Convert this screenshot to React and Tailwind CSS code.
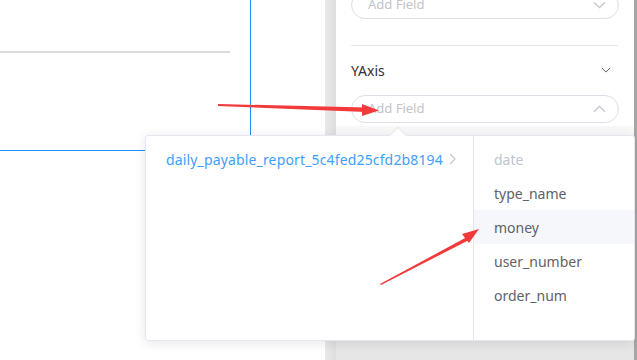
import React from 'react'

const Chevron = ({ dir = 'down', className = '', w = 13 }) => {
  const points = {
    down: '1,1 6,6 11,1',
    up: '1,6 6,1 11,6',
    right: '1,1 6,6 1,11',
  }[dir]
  const size = dir === 'right' ? { w: 8, h: 12, vb: '0 0 8 12' } : { w, h: Math.round(w * 0.6), vb: '0 0 12 7' }
  return (
    <svg width={size.w} height={size.h} viewBox={size.vb} className={className} fill="none">
      <polyline points={points} stroke="currentColor" strokeWidth="1.1" />
    </svg>
  )
}

const fields = ['date', 'type_name', 'money', 'user_number', 'order_num']

const App = () => {
  return (
    <div className="relative w-[637px] h-[360px] overflow-hidden bg-white flex font-['Noto_Sans','Liberation_Sans',sans-serif]">
      {/* canvas area */}
      <div className="w-[325px] h-full bg-white flex flex-col">
        <div className="w-[251px] h-[151px] border-r border-b border-[#1890ff]">
          <div className="mt-[51px] w-[230px] h-[2px] bg-[#dcdcdc]" />
        </div>
      </div>

      {/* splitter */}
      <div className="w-[11px] h-full bg-gradient-to-r from-[#e9e9e9] to-[#dedede]" />

      {/* settings panel */}
      <div className="w-[298px] h-full flex flex-col">
        <div className="bg-white px-[15px] pb-[3px]">
          <div className="-mt-[9px] h-[28px] rounded-full border border-[#dcdfe6] flex items-center justify-between pl-4 pr-3">
            <span className="text-[13px] text-[#c0c4cc]">Add Field</span>
            <Chevron dir="down" className="text-[#c0c4cc]" />
          </div>
          <div className="mt-[26px] h-px bg-[#e8e8e8] w-[267px]" />
          <div className="h-[49px] pb-px flex items-center justify-between pr-[8px]">
            <span className="text-[14px] text-[#303133]">YAxis</span>
            <Chevron dir="down" w={10} className="text-[#505050]" />
          </div>
          <div className="h-[28px] rounded-full border border-[#dcdfe6] flex items-center justify-between pl-4 pr-3">
            <span className="text-[13px] text-[#c0c4cc]">Add Field</span>
            <Chevron dir="up" className="text-[#c0c4cc]" />
          </div>
        </div>
        <div className="h-[215px] bg-[#f8f8f8]" />
        <div className="flex-1 bg-[#e6e6e6]" />
      </div>

      {/* scrollbar edge */}
      <div className="w-[3px] h-full bg-[#a6a6a6]" />

      {/* cascader popover */}
      <div className="absolute left-[145px] top-[135px] w-[490px] h-[206px] bg-white border border-[#e4e7ed] rounded-[3px] shadow-[0_2px_12px_0_rgba(0,0,0,0.1)] flex">
        <div className="absolute left-[246px] -top-[7px] w-[12px] h-[12px] rotate-45 bg-white border-l border-t border-[#e4e7ed]" />
        <div className="w-[328px] border-r border-[#e4e7ed] pt-[6px]">
          <div className="h-[34px] flex items-center justify-between pl-5 pr-[16px] text-[14px] tracking-[0.15px] text-[#409eff]">
            <span>daily_payable_report_5c4fed25cfd2b8194</span>
            <Chevron dir="right" className="text-[#c0c4cc]" />
          </div>
        </div>
        <div className="flex-1 pt-[6px]">
          {fields.map((f, i) => (
            <div
              key={f}
              className={
                i === 0
                  ? 'h-[34px] flex items-center pl-5 text-[14px] text-[#c0c4cc]'
                  : i === 2
                  ? 'h-[34px] flex items-center pl-5 text-[14px] text-[#606266] bg-[#f5f7fa]'
                  : 'h-[34px] flex items-center pl-5 text-[14px] text-[#606266]'
              }
            >
              {f}
            </div>
          ))}
        </div>
      </div>

      {/* annotation arrows */}
      <svg className="absolute inset-0 pointer-events-none" width="637" height="360" viewBox="0 0 637 360">
        <polygon points="218,104 366,107.5 366,112 218,106" fill="#f23a3a" />
        <polygon points="362,104 379,110.5 362,116" fill="#f23a3a" />
        <polygon points="380,284 467,237 469,240 381,285" fill="#f23a3a" />
        <polygon points="462,234 479,229 469,243" fill="#f23a3a" />
      </svg>
    </div>
  )
}

export default App
